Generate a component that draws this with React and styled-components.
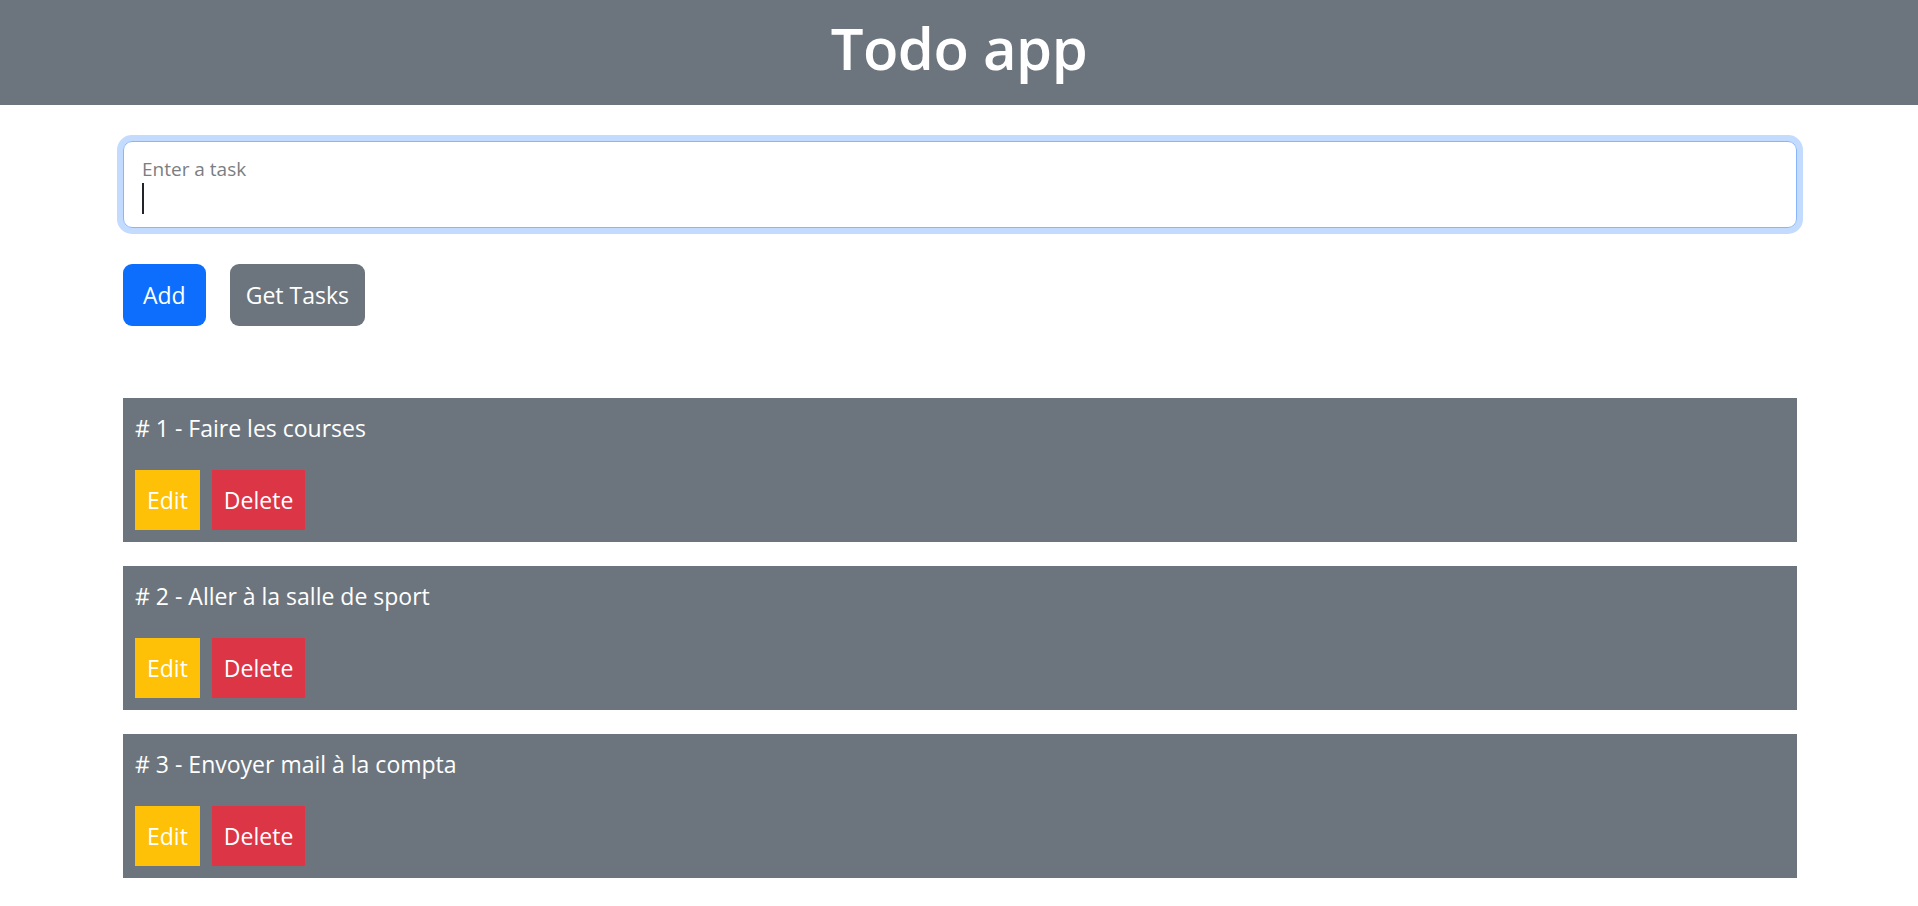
// App.jsx
import React, { useState } from 'react';
import styled, { createGlobalStyle } from 'styled-components';

const GlobalStyle = createGlobalStyle`
  body {
    margin: 0;
    background: #fff;
    font-family: "Open Sans", "Noto Sans", "Liberation Sans", sans-serif;
    color: #212529;
  }
`;

const Header = styled.header`
  background-color: #6c757d;
  padding: 12px 0 21px;
  text-align: center;
`;

const Title = styled.h1`
  margin: 0;
  font-size: 58px;
  font-weight: 600;
  line-height: 72px;
  color: #fff;
  letter-spacing: -0.5px;
`;

const Main = styled.main`
  padding: 36px 121px 0 123px;
`;

const Field = styled.div`
  height: 87px;
  box-sizing: border-box;
  border: 1.5px solid #86b7fe;
  border-radius: 9px;
  box-shadow: 0 0 0 6px #c2dbfe;
  padding: 15px 18px 0;
`;

const FloatLabel = styled.label`
  display: block;
  font-size: 19px;
  line-height: 24px;
  color: #7b7e82;
`;

const Caret = styled.span`
  display: block;
  width: 2px;
  height: 31px;
  margin-top: 2px;
  background: #212529;
`;

const Actions = styled.div`
  display: flex;
  gap: 24px;
  margin-top: 36px;
`;

const Button = styled.button`
  border: none;
  border-radius: 9px;
  padding: 13px ${(p) => (p.$variant === 'primary' ? '20px' : '16px')};
  font-family: inherit;
  font-size: 23px;
  line-height: 36px;
  color: #fff;
  cursor: pointer;
  background: ${(p) => (p.$variant === 'primary' ? '#0d6efd' : '#6c757d')};
`;

const TaskList = styled.ul`
  list-style: none;
  margin: 72px 0 0;
  padding: 0;
  display: flex;
  flex-direction: column;
  gap: 24px;
`;

const TaskItem = styled.li`
  background: #6c757d;
  padding: 12px;
  color: #fff;
`;

const TaskText = styled.p`
  margin: 0 0 24px;
  font-size: 23px;
  line-height: 36px;
`;

const TaskActions = styled.div`
  display: flex;
  gap: 12px;
`;

const SmallButton = styled.button`
  border: none;
  border-radius: 0;
  padding: 12px;
  font-family: inherit;
  font-size: 23px;
  line-height: 36px;
  color: #fff;
  cursor: pointer;
  background: ${(p) => (p.$danger ? '#dc3545' : '#ffc107')};
`;

const initialTasks = [
  { id: 1, title: 'Faire les courses' },
  { id: 2, title: 'Aller à la salle de sport' },
  { id: 3, title: 'Envoyer mail à la compta' },
];

export default function App() {
  const [tasks] = useState(initialTasks);

  return (
    <>
      <GlobalStyle />
      <Header>
        <Title>Todo app</Title>
      </Header>
      <Main>
        <Field>
          <FloatLabel>Enter a task</FloatLabel>
          <Caret />
        </Field>
        <Actions>
          <Button $variant="primary">Add</Button>
          <Button>Get Tasks</Button>
        </Actions>
        <TaskList>
          {tasks.map((t) => (
            <TaskItem key={t.id}>
              <TaskText># {t.id} - {t.title}</TaskText>
              <TaskActions>
                <SmallButton>Edit</SmallButton>
                <SmallButton $danger>Delete</SmallButton>
              </TaskActions>
            </TaskItem>
          ))}
        </TaskList>
      </Main>
    </>
  );
}
